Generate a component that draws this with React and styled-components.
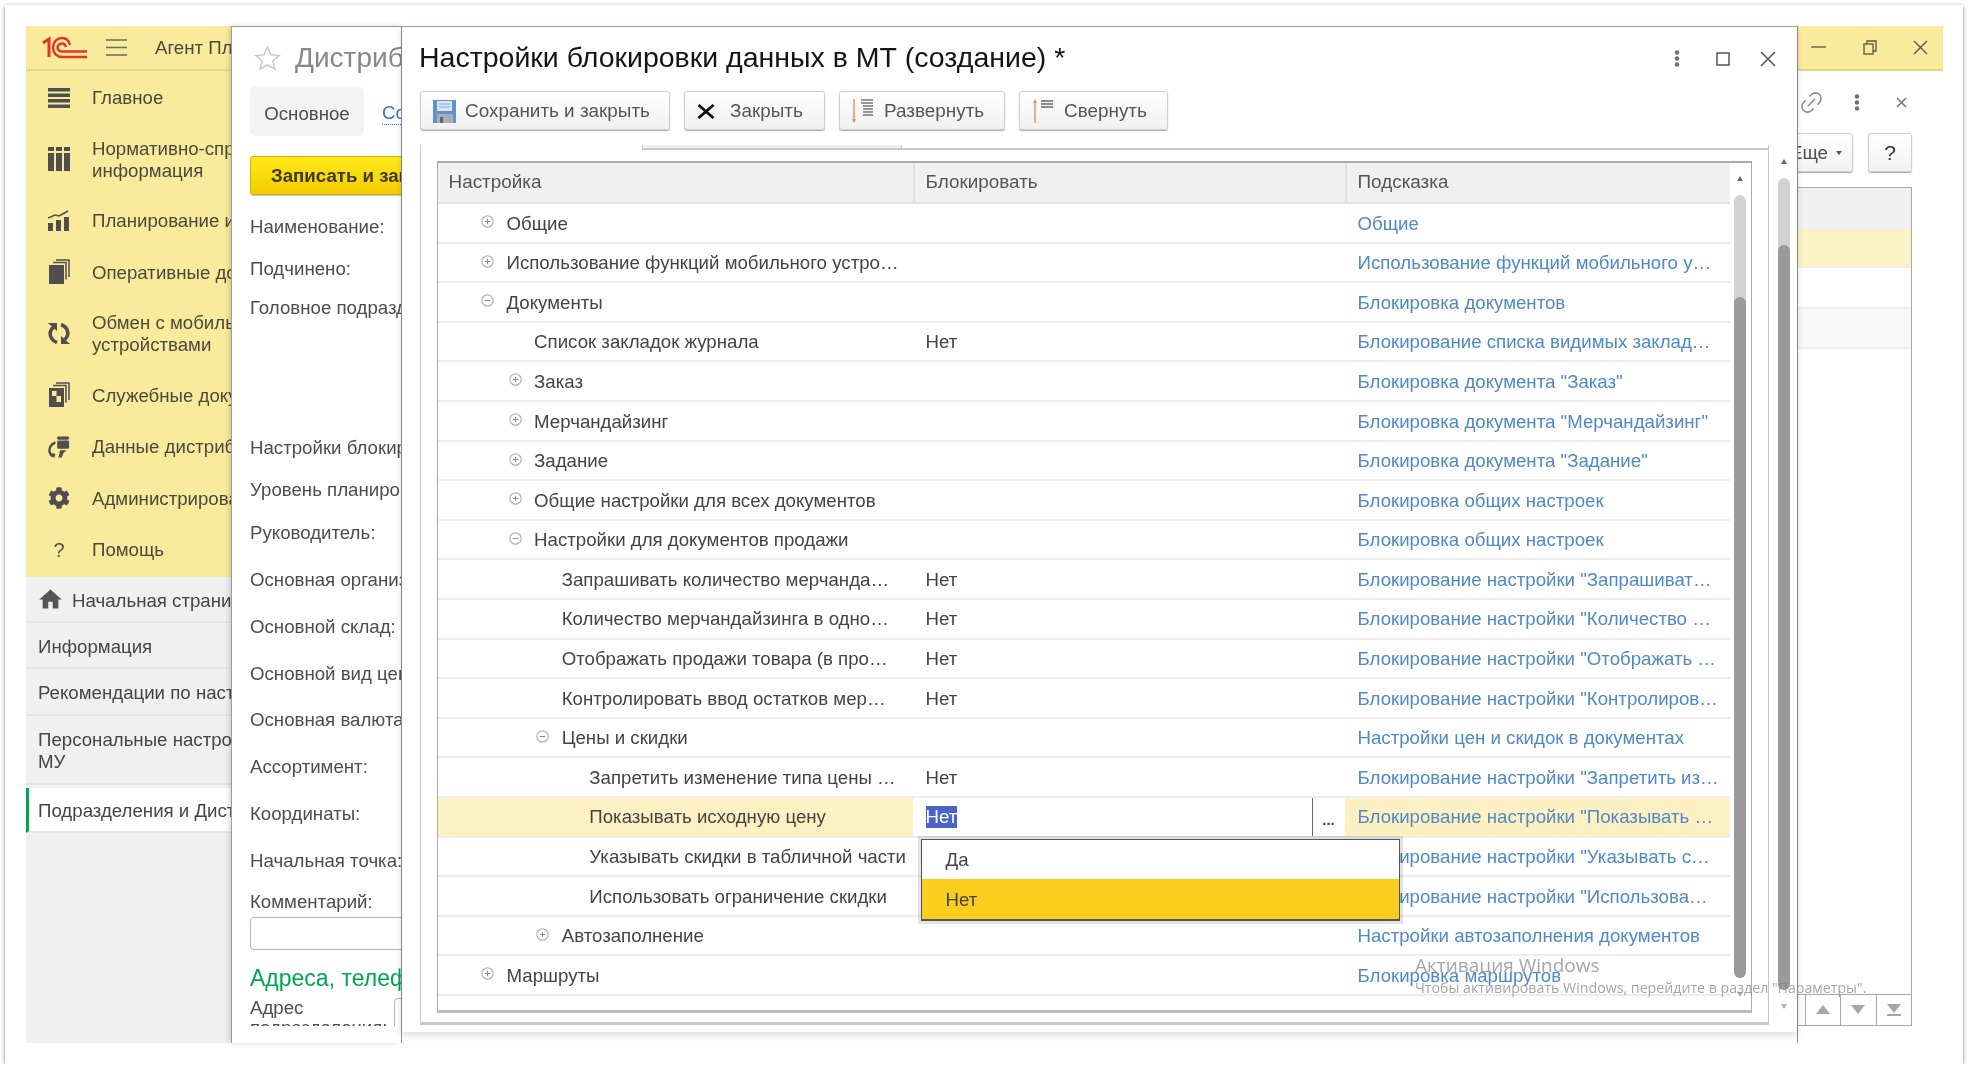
import React from 'react';
import styled, { createGlobalStyle } from 'styled-components';
import { FaCog } from 'react-icons/fa';
import { MdHome } from 'react-icons/md';
import { Link2 } from 'lucide-react';

const Global = createGlobalStyle`
  html, body { margin: 0; padding: 0; background: #fff; overflow: hidden; }
  * { box-sizing: border-box; }
  body { font-family: "Liberation Sans", Arial, sans-serif; font-size: 18.67px; color: #4d4d4d; }
`;

const Card = styled.div`
  position: relative;
  margin: 5px 0 0 5px;
  width: 1958px;
  height: 1059px;
  padding: 21px 20px 21px 21px;
  background: #fff;
  box-shadow: 0 1px 4px rgba(0, 0, 0, 0.45);
  filter: blur(0.4px);
`;
const Window = styled.div`
  display: flex;
  height: 1017px;
  background: #fff;
`;

/* sidebar */
const Sidebar = styled.aside`
  width: 205px;
  flex: none;
  display: flex;
  flex-direction: column;
  overflow: hidden;
  white-space: nowrap;
  background: #f0f0f0;
`;
const AppBar = styled.div`
  height: 45px;
  flex: none;
  display: flex;
  align-items: center;
  padding-left: 16px;
  background: #faeb9c;
  border-bottom: 2px solid #e4d88f;
`;
const AppTitle = styled.span`
  margin-left: 28px;
  padding-top: 1px;
  color: #4a4a3c;
`;
const Hamburger = styled.svg`
  margin-left: 19px;
  flex: none;
`;
const Nav = styled.nav`
  height: 506px;
  flex: none;
  padding-top: 1px;
  background: #faeb9c;
`;
const NavItem = styled.div`
  display: flex;
  align-items: center;
  height: ${p => (p.$tall ? 71.5 : 51.5)}px;
  padding-left: 22px;
  line-height: 22px;
  color: #4a4a3c;
`;
const NavText = styled.span`
  padding-top: 1px;
`;
const NavIcon = styled.span`
  width: 22px;
  height: 22px;
  flex: none;
  margin-right: 22px;
  display: flex;
  align-items: center;
  justify-content: center;
  color: #4f4f4f;
  font-size: 20px;
`;
const Section = styled.div`
  display: flex;
  align-items: center;
  height: ${p => p.$h}px;
  margin-top: ${p => (p.$active ? 3 : 0)}px;
  padding-left: ${p => (p.$active ? 9 : 12)}px;
  padding-top: 3px;
  line-height: 22px;
  background: ${p => (p.$active ? '#fff' : '#f0f0f0')};
  border-left: ${p => (p.$active ? '3px solid #00a650' : '0')};
  border-bottom: 2px solid #e4e4e4;
  color: #454545;
`;
const HomeIcon = styled(MdHome)`
  color: #555;
  font-size: 27px;
  margin: -2px 8px 0 -1px;
  flex: none;
`;

/* background form */
const FormPanel = styled.section`
  width: 170px;
  flex: none;
  overflow: hidden;
  white-space: nowrap;
  background: #fff;
  border-left: 1px solid #9c9c9c;
  border-top: 1px solid #9c9c9c;
  box-shadow: -2px 0 5px rgba(0, 0, 0, 0.15);
  padding-left: 18px;
  position: relative;
`;
const FormClip = styled.div`
  height: 999px;
  overflow: hidden;
`;
const FormHead = styled.div`
  height: 60px;
  display: flex;
  align-items: center;
  padding-top: 2px;
`;
const FormTitle = styled.span`
  margin-left: 14px;
  font-size: 28px;
  color: #888;
`;
const Tabs = styled.div`
  display: flex;
  align-items: center;
  height: 49px;
`;
const TabActive = styled.div`
  width: 114px;
  height: 49px;
  flex: none;
  display: flex;
  align-items: center;
  justify-content: center;
  padding-top: 4px;
  background: #f3f3f3;
  border-radius: 5px;
`;
const TabLink = styled.span`
  margin-left: 18px;
  margin-top: 4px;
  color: #3b73c0;
  border-bottom: 1px dotted #3b73c0;
`;
const SaveBtn = styled.div`
  margin-top: 20px;
  height: 39px;
  width: 260px;
  display: flex;
  align-items: center;
  padding-left: 20px;
  font-weight: bold;
  color: #3c3a20;
  background: linear-gradient(#ffe81a, #f3cd00);
  border: 1px solid #d0b400;
  border-radius: 3px;
  box-shadow: 0 1px 1px rgba(0, 0, 0, 0.25);
`;
const FieldLabel = styled.div`
  margin-top: ${p => p.$top}px;
  height: 22px;
  line-height: 22px;
`;
const Memo = styled.div`
  margin-top: 4px;
  height: 33px;
  width: 200px;
  border: 1px solid #b4b4b4;
  border-radius: 4px;
`;
const GroupTitle = styled.div`
  margin-top: 15px;
  height: 26px;
  line-height: 26px;
  font-size: 23px;
  color: #00a650;
`;
const AddressRow = styled.div`
  margin-top: 7px;
  display: flex;
  height: 60px;
  line-height: 20px;
  white-space: normal;
`;
const AddressLabel = styled.div`
  width: 144px;
  flex: none;
`;
const AddressBox = styled.div`
  width: 100px;
  height: 40px;
  flex: none;
  border: 1px solid #b4b4b4;
  border-radius: 4px;
`;

/* dialog */
const DialogSlot = styled.div`
  width: 1397px;
  flex: none;
  position: relative;
  z-index: 1;
  background: #fff;
  border-left: 1px solid #8c8c8c;
  border-right: 1px solid #8c8c8c;
`;
const Dialog = styled.div`
  height: 1006px;
  display: flex;
  flex-direction: column;
  padding-left: 18px;
  background: #fff;
  border-top: 1px solid #9c9c9c;
  box-shadow: 0 3px 7px rgba(0, 0, 0, 0.14);
`;
const DialogHead = styled.div`
  height: 64px;
  flex: none;
  display: flex;
  align-items: center;
  padding-bottom: 4px;
`;
const DialogTitle = styled.h1`
  margin: 0 0 0 -1px;
  flex: 1;
  font-weight: normal;
  font-size: 28.5px;
  color: #141414;
`;
const HeadControls = styled.div`
  display: flex;
  align-items: center;
  margin-right: 21px;
  margin-top: 3px;
`;
const Toolbar = styled.div`
  height: 39px;
  flex: none;
  display: flex;
  gap: 14px;
`;
const ToolButton = styled.button`
  display: flex;
  align-items: center;
  width: ${p => p.$w}px;
  height: 39px;
  padding: 1px 0 0 ${p => p.$pad}px;
  font: inherit;
  font-size: 18.9px;
  color: #555;
  background: linear-gradient(#fff, #f0f0f0);
  border: 1px solid #cfcfcf;
  border-radius: 3px;
  box-shadow: 0 1px 1px rgba(0, 0, 0, 0.35);
`;
const ToolIcon = styled.svg`
  flex: none;
  margin-right: ${p => p.$gap}px;
`;
const Body = styled.div`
  flex: 1;
  min-height: 0;
  display: flex;
  margin-top: 15px;
  height: 880px;
`;
const TabPanel = styled.div`
  width: 1349px;
  height: 880px;
  flex: none;
  display: flex;
  flex-direction: column;
  border-left: 1px solid #c8c8c8;
  border-right: 1px solid #c8c8c8;
  border-bottom: 3px solid #c8c8c8;
  padding: 0 0 9px 0;
`;
const TabStrip = styled.div`
  height: 5px;
  flex: none;
  display: flex;
`;
const TabStub = styled.div`
  margin-left: 221px;
  width: 260px;
  flex: none;
  background: #eeeeee;
  border: 1px solid #c8c8c8;
  border-top: 0;
  border-bottom-width: 2px;
`;
const TabLine = styled.div`
  flex: 1;
  border-bottom: 2px solid #c8c8c8;
  margin-right: -1px;
`;
const Table = styled.div`
  margin: 11px 16px 0 15.5px;
  height: 852px;
  flex: none;
  display: flex;
  border: 1px solid #ababab;
  border-top-width: 2px;
  border-bottom: 3px solid #bdbdbd;
`;
const Grid = styled.div`
  width: 1292px;
  flex: none;
`;
const HeaderRow = styled.div`
  display: grid;
  grid-template-columns: 475px 432px 1fr;
  height: 41px;
  background: #f0f0f0;
  border-bottom: 2px solid #e2e2e2;
`;
const HeaderCell = styled.div`
  display: flex;
  align-items: center;
  padding-left: 11px;
  padding-bottom: 1px;
  font-size: 18.9px;
  color: #555;
  border-left: ${p => (p.$first ? '0' : '2px solid #e2e2e2')};
`;
const Row = styled.div`
  display: grid;
  grid-template-columns: 475px 432px 1fr;
  height: 39.6px;
  border-bottom: 2px solid #ededed;
  white-space: nowrap;
`;
const NameCell = styled.div`
  display: flex;
  align-items: center;
  padding-left: ${p => 43.5 + p.$level * 27.6}px;
  padding-top: 1.5px;
  background: ${p => (p.$hl ? '#fdf1c3' : 'transparent')};
  color: #444;
`;
const Toggle = styled.svg`
  width: 13px;
  height: 13px;
  flex: none;
  margin: -4px 12.5px 0 0;
`;
const ToggleSpace = styled.span`
  width: 25.5px;
  flex: none;
`;
const ValueCell = styled.div`
  display: flex;
  align-items: center;
  padding-left: 13px;
  padding-top: 1.5px;
  color: #444;
`;
const EditCell = styled(ValueCell)`
  position: relative;
  padding-right: 0;
`;
const Selected = styled.span`
  background: #4a63c8;
  color: #fff;
  line-height: 22px;
`;
const EditButton = styled.span`
  position: absolute;
  top: 0;
  right: 0;
  bottom: 0;
  width: 33px;
  display: flex;
  align-items: center;
  justify-content: center;
  padding-top: 6px;
  font-weight: bold;
  font-size: 15px;
  border-left: 1px solid #666;
`;
const Dropdown = styled.div`
  position: absolute;
  z-index: 3;
  top: 41px;
  left: 8px;
  width: 479px;
  height: 82px;
  background: #fff;
  border: 1px solid #555;
  border-bottom-width: 2px;
  box-shadow: 0 0 0 3px rgba(0, 0, 0, 0.11);
`;
const Option = styled.div`
  height: ${p => (p.$on ? 40 : 39)}px;
  display: flex;
  align-items: center;
  padding-left: 24px;
  padding-top: ${p => (p.$on ? 3 : 2)}px;
  color: #444;
  background: ${p => (p.$on ? '#fbcd1e' : '#fff')};
`;
const HintCell = styled.div`
  display: flex;
  align-items: center;
  padding-left: 13px;
  padding-top: 1.5px;
  color: #5089c6;
  background: ${p => (p.$hl ? '#fdf1c3' : 'transparent')};
`;
const Gutter = styled.div`
  flex: 1;
  display: flex;
  flex-direction: column;
  align-items: center;
  padding-top: ${p => p.$top}px;
`;
const Arrow = styled.div`
  width: 0;
  height: 0;
  flex: none;
  border-left: 3px solid transparent;
  border-right: 3px solid transparent;
  ${p => (p.$down ? 'border-top: 5px solid #b0b0b0;' : 'border-bottom: 5px solid #666;')}
`;
const Track = styled.div`
  width: ${p => p.$w}px;
  height: ${p => p.$h}px;
  flex: none;
  margin: ${p => p.$gap}px 0;
  padding-top: ${p => p.$thumb}px;
  background: #d2d2d2;
  border-radius: 6px;
`;
const Thumb = styled.div`
  height: 100%;
  background: #9a9a9a;
  border-radius: 6px;
`;
const OuterGutter = styled(Gutter)`
  flex: none;
  width: 29px;
  padding-left: 8px;
  padding-right: 7px;
`;

/* right form */
const RightPane = styled.div`
  width: 145px;
  flex: none;
  display: flex;
  flex-direction: column;
  overflow: hidden;
  background: #fff;
`;
const RightBar = styled.div`
  height: 45px;
  flex: none;
  display: flex;
  align-items: center;
  padding-left: 13px;
  background: #faeb9c;
  border-bottom: 2px solid #e4d88f;
`;
const WinGap = styled.svg`
  flex: none;
  margin-left: ${p => p.$ml}px;
`;
const RightTools = styled.div`
  height: 62px;
  flex: none;
  display: flex;
  align-items: center;
  padding-top: 0;
  color: #8e8e8e;
`;
const RightButtons = styled.div`
  height: 39px;
  flex: none;
  display: flex;
  justify-content: flex-end;
  padding-right: 31px;
  gap: 15px;
`;
const MoreBtn = styled.div`
  width: 90px;
  flex: none;
  display: flex;
  align-items: center;
  justify-content: flex-end;
  padding-right: 10px;
  gap: 8px;
  background: linear-gradient(#fff, #f2f2f2);
  border: 1px solid #cfcfcf;
  border-radius: 3px;
  box-shadow: 0 1px 1px rgba(0, 0, 0, 0.35);
`;
const HelpBtn = styled(MoreBtn)`
  width: 44px;
  padding: 0;
  justify-content: center;
  font-size: 21px;
  color: #333;
`;
const Caret = styled.span`
  width: 0;
  height: 0;
  border-left: 3px solid transparent;
  border-right: 3px solid transparent;
  border-top: 4px solid #555;
`;
const MiniTable = styled.div`
  margin: 15px 31px 0 -2px;
  height: 839px;
  flex: none;
  display: flex;
  flex-direction: column;
  border: 1px solid #a8a8a8;
  background: #fff;
`;
const MiniRow = styled.div`
  height: ${p => p.$h}px;
  flex: none;
  background: ${p => p.$bg};
  border-bottom: 2px solid #eeeeee;
`;
const MiniFill = styled.div`
  flex: 1;
`;
const MiniFoot = styled.div`
  height: 31px;
  flex: none;
  display: flex;
  padding-left: 8px;
  border-top: 1px solid #a8a8a8;
`;
const FootBtn = styled.div`
  flex: 1;
  display: flex;
  align-items: center;
  justify-content: center;
  border-left: 1px solid #a8a8a8;
`;

const Watermark = styled.div`
  position: absolute;
  z-index: 5;
  left: 1410px;
  top: 948px;
  color: rgba(130, 130, 130, 0.72);
  pointer-events: none;
  white-space: nowrap;
`;
const WaterBig = styled.div`
  font-family: "Open Sans", sans-serif;
  font-size: 19px;
  line-height: 25px;
`;
const WaterSmall = styled.div`
  font-family: "Open Sans", sans-serif;
  font-size: 14.2px;
  line-height: 20px;
`;

const Logo = () => (
  <svg width="45" height="23" viewBox="0 0 45 23" fill="none" stroke="#e3342b" strokeWidth="2.4" style={{ flex: 'none' }}>
    <path d="M1 7l6-4v18" strokeWidth="3" />
    <path d="M28 9c-1-4-4-7-8-7-5 0-9 4-9 9.500s4 9.500 9 9.500h25" />
    <path d="M24 11c-.6-2-2-3.500-4-3.500-2.500 0-4.500 2-4.500 4s2 4 4.500 4h25" />
  </svg>
);
const Bars = () => (
  <svg width="22" height="22" viewBox="0 0 22 22" fill="#4f4f4f">
    <rect y="1" width="22" height="3.500" /><rect y="6.500" width="22" height="3.500" /><rect y="12" width="22" height="3.500" /><rect y="17.500" width="22" height="3.500" />
  </svg>
);
const Columns = () => (
  <svg width="22" height="26" viewBox="0 0 22 26" fill="#4f4f4f">
    <rect x="0" y="1" width="6" height="4" /><rect x="8" y="1" width="6" height="4" /><rect x="16" y="1" width="6" height="4" />
    <rect x="0" y="7" width="6" height="18" /><rect x="8" y="7" width="6" height="18" /><rect x="16" y="7" width="6" height="18" />
  </svg>
);
const Chart = () => (
  <svg width="22" height="22" viewBox="0 0 22 22" fill="#4f4f4f">
    <rect x="0" y="13" width="5" height="8" /><rect x="8" y="10" width="5" height="11" /><rect x="16" y="7" width="5" height="14" />
    <path d="M0 8l7-3 4 1 9-5" fill="none" stroke="#4f4f4f" strokeWidth="1.600" />
  </svg>
);
const Docs = () => (
  <svg width="22" height="26" viewBox="0 0 22 26" fill="#4f4f4f">
    <rect x="1" y="6" width="15" height="19" />
    <path d="M5 3.500h13v17" fill="none" stroke="#4f4f4f" strokeWidth="1.500" />
    <path d="M8 1h13v17" fill="none" stroke="#4f4f4f" strokeWidth="1.500" />
  </svg>
);
const ServiceDocs = () => (
  <svg width="22" height="26" viewBox="0 0 22 26" fill="#4f4f4f">
    <rect x="1" y="6" width="15" height="19" />
    <rect x="4" y="9" width="4.500" height="5" fill="#faeb9c" /><rect x="8.500" y="14" width="4.500" height="6" fill="#faeb9c" />
    <path d="M5 3.500h13v17" fill="none" stroke="#4f4f4f" strokeWidth="1.500" />
    <path d="M8 1h13v17" fill="none" stroke="#4f4f4f" strokeWidth="1.500" />
  </svg>
);
const SyncIcon = () => (
  <svg width="22" height="23" viewBox="0 0 22 23" fill="#4f4f4f">
    <g>
      <path d="M0 1h9v8z" />
      <path d="M6 5C3.200 7 2 9.500 2.200 12c.2 3.500 2.800 7 6.800 8.500" fill="none" stroke="#4f4f4f" strokeWidth="3.600" />
    </g>
    <g transform="rotate(180 11 11.500)">
      <path d="M0 1h9v8z" />
      <path d="M6 5C3.200 7 2 9.500 2.200 12c.2 3.500 2.800 7 6.800 8.500" fill="none" stroke="#4f4f4f" strokeWidth="3.600" />
    </g>
  </svg>
);
const DataIcon = () => (
  <svg width="24" height="24" viewBox="0 0 24 24" fill="#4f4f4f">
    <rect x="10" y="0.500" width="13" height="3.500" rx="1.500" />
    <rect x="10" y="5" width="13" height="9" rx="1.500" />
    <path d="M13 15.500h7l-3.500 3.500-1.500 4.500h-4l1.500-4z" />
    <path d="M8 7C4 9 1.500 12 1.500 15.500c0 2.500 1.200 5 4 7" fill="none" stroke="#4f4f4f" strokeWidth="2.600" />
    <path d="M2 19l6 0-1 5z" />
  </svg>
);
const Floppy = () => (
  <ToolIcon $gap={9} width="23" height="23" viewBox="0 0 23 23">
    <path d="M0 0h23v23H0z" fill="#5f93cf" />
    <rect x="4" y="1" width="15" height="10" fill="#dbe6f2" />
    <path d="M6 4h11M6 7h11" stroke="#7ea6d4" strokeWidth="1.200" />
    <rect x="4" y="14" width="16" height="9" fill="#a9adb2" />
    <rect x="7" y="17" width="3" height="6" fill="#5b6878" />
  </ToolIcon>
);
const BigX = () => (
  <ToolIcon $gap={15} width="18" height="15" viewBox="0 0 18 15">
    <path d="M1.500 1l15 13M16.500 1l-15 13" stroke="#111" strokeWidth="2.800" />
  </ToolIcon>
);
const ExpandIc = () => (
  <ToolIcon $gap={10} width="23" height="26" viewBox="0 0 23 26" fill="none">
    <path d="M3 1v23" stroke="#e78a5a" strokeWidth="1.400" />
    <path d="M1 21l2 4 2-4z" fill="#e78a5a" />
    <path d="M10 2h12M10 5h12M12 8h10M12 11h10M12 14h10M12 17h10" stroke="#777" strokeWidth="1.300" />
  </ToolIcon>
);
const CollapseIc = () => (
  <ToolIcon $gap={10} width="22" height="26" viewBox="0 0 22 26" fill="none">
    <path d="M3 3v22" stroke="#e78a5a" strokeWidth="1.400" />
    <path d="M1 5l2-4 2 4z" fill="#e78a5a" />
    <path d="M9 3h12M9 6h12M9 9h12" stroke="#666" strokeWidth="1.500" />
  </ToolIcon>
);
const ToggleIc = ({ open }) => (
  <Toggle viewBox="0 0 13 13" fill="none" stroke="#b4b4b4">
    <circle cx="6.500" cy="6.500" r="5.700" strokeWidth="1.200" />
    <path d="M3.800 6.500h5.400" stroke="#8a8a8a" />
    {!open && <path d="M6.500 3.800v5.400" stroke="#8a8a8a" />}
  </Toggle>
);
const Kebab = ({ ml = 0, color = '#6e6e6e' }) => (
  <svg width="6" height="17" viewBox="0 0 6 17" fill={color} style={{ marginLeft: ml, flex: 'none' }}>
    <circle cx="3" cy="2.500" r="2.200" /><circle cx="3" cy="8.500" r="2.200" /><circle cx="3" cy="14.500" r="2.200" />
  </svg>
);
const FootTri = ({ kind }) => (
  <svg width="16" height="14" viewBox="0 0 16 14" fill="#a6a6a6">
    {kind === 'up' && <path d="M8 2l7 9H1z" />}
    {kind === 'down' && <path d="M1 2h14l-7 9z" />}
    {kind === 'end' && <path d="M1 1h14l-7 9zM1 11h14v2H1z" />}
  </svg>
);

const navItems = [
  [<Bars />, 'Главное'],
  [<Columns />, <>Нормативно-справочная<br />информация</>, true],
  [<Chart />, 'Планирование и анализ'],
  [<Docs />, 'Оперативные документы'],
  [<SyncIcon />, <>Обмен с мобильными<br />устройствами</>, true],
  [<ServiceDocs />, 'Служебные документы'],
  [<DataIcon />, 'Данные дистрибьюторов'],
  [<FaCog size={24} />, 'Администрирование'],
  ['?', 'Помощь'],
];

const labels = [
  ['Наименование:', 21], ['Подчинено:', 20], ['Головное подразделение:', 17],
  ['Настройки блокировки:', 118], ['Уровень планирования:', 20], ['Руководитель:', 21],
  ['Основная организация:', 25], ['Основной склад:', 25], ['Основной вид цены:', 25],
  ['Основная валюта:', 24], ['Ассортимент:', 25], ['Координаты:', 25],
  ['Начальная точка:', 25], ['Комментарий:', 19],
];

const rows = [
  ['Общие', 0, 'plus', '', 'Общие'],
  ['Использование функций мобильного устро…', 0, 'plus', '', 'Использование функций мобильного у…'],
  ['Документы', 0, 'minus', '', 'Блокировка документов'],
  ['Список закладок журнала', 1, '', 'Нет', 'Блокирование списка видимых заклад…'],
  ['Заказ', 1, 'plus', '', 'Блокировка документа "Заказ"'],
  ['Мерчандайзинг', 1, 'plus', '', 'Блокировка документа "Мерчандайзинг"'],
  ['Задание', 1, 'plus', '', 'Блокировка документа "Задание"'],
  ['Общие настройки для всех документов', 1, 'plus', '', 'Блокировка общих настроек'],
  ['Настройки для документов продажи', 1, 'minus', '', 'Блокировка общих настроек'],
  ['Запрашивать количество мерчанда…', 2, '', 'Нет', 'Блокирование настройки "Запрашиват…'],
  ['Количество мерчандайзинга в одно…', 2, '', 'Нет', 'Блокирование настройки "Количество …'],
  ['Отображать продажи товара (в про…', 2, '', 'Нет', 'Блокирование настройки "Отображать …'],
  ['Контролировать ввод остатков мер…', 2, '', 'Нет', 'Блокирование настройки "Контролиров…'],
  ['Цены и скидки', 2, 'minus', '', 'Настройки цен и скидок в документах'],
  ['Запретить изменение типа цены …', 3, '', 'Нет', 'Блокирование настройки "Запретить из…'],
  ['Показывать исходную цену', 3, '', 'edit', 'Блокирование настройки "Показывать …'],
  ['Указывать скидки в табличной части', 3, '', '', 'Блокирование настройки "Указывать с…'],
  ['Использовать ограничение скидки', 3, '', '', 'Блокирование настройки "Использова…'],
  ['Автозаполнение', 2, 'plus', '', 'Настройки автозаполнения документов'],
  ['Маршруты', 0, 'plus', '', 'Блокировка маршрутов'],
];

export default function App() {
  return (
    <>
      <Global />
      <Card>
        <Window>
          <Sidebar>
            <AppBar>
              <Logo />
              <Hamburger width="21" height="17" viewBox="0 0 21 17" stroke="#6a6a5c" strokeWidth="1.600">
                <path d="M0 1h21M0 8.500h21M0 16h21" />
              </Hamburger>
              <AppTitle>Агент Плюс: Управление дистрибуцией</AppTitle>
            </AppBar>
            <Nav>
              {navItems.map(([icon, text, tall], i) => (
                <NavItem key={i} $tall={tall}>
                  <NavIcon>{icon}</NavIcon>
                  <NavText>{text}</NavText>
                </NavItem>
              ))}
            </Nav>
            <Section $h={46}><HomeIcon />Начальная страница</Section>
            <Section $h={46}>Информация</Section>
            <Section $h={47}>Рекомендации по настройке</Section>
            <Section $h={69}><span>Персональные настройки<br />МУ</span></Section>
            <Section $h={45} $active>Подразделения и Дистрибьюторы</Section>
          </Sidebar>

          <FormPanel>
            <FormClip>
              <FormHead>
                <svg width="27" height="26" viewBox="0 0 27 26" fill="none" stroke="#c9c9c9" strokeWidth="1.500" style={{ marginLeft: 4, flex: 'none' }}>
                  <path d="M13.500 2l3.400 7.700 8.300.8-6.300 5.500 1.900 8.100-7.300-4.300-7.300 4.300 1.900-8.100L1.800 10.500l8.300-.8z" />
                </svg>
                <FormTitle>Дистрибьютор</FormTitle>
              </FormHead>
              <Tabs>
                <TabActive>Основное</TabActive>
                <TabLink>Сотрудники</TabLink>
              </Tabs>
              <SaveBtn>Записать и закрыть</SaveBtn>
              {labels.map(([t, top]) => <FieldLabel key={t} $top={top}>{t}</FieldLabel>)}
              <Memo />
              <GroupTitle>Адреса, телефоны</GroupTitle>
              <AddressRow>
                <AddressLabel>Адрес подразделения:</AddressLabel>
                <AddressBox />
              </AddressRow>
            </FormClip>
          </FormPanel>

          <DialogSlot>
            <Dialog>
              <DialogHead>
                <DialogTitle>Настройки блокировки данных в МТ (создание) *</DialogTitle>
                <HeadControls>
                  <Kebab />
                  <svg width="14" height="14" viewBox="0 0 14 14" fill="none" stroke="#555" strokeWidth="1.500" style={{ marginLeft: 36 }}>
                    <rect x="1" y="1" width="12" height="12" />
                  </svg>
                  <svg width="16" height="16" viewBox="0 0 16 16" stroke="#555" strokeWidth="1.500" style={{ marginLeft: 30 }}>
                    <path d="M1 1l14 14M15 1L1 15" />
                  </svg>
                </HeadControls>
              </DialogHead>
              <Toolbar>
                <ToolButton $w={250} $pad={12}><Floppy />Сохранить и закрыть</ToolButton>
                <ToolButton $w={141} $pad={12}><BigX />Закрыть</ToolButton>
                <ToolButton $w={166} $pad={11}><ExpandIc />Развернуть</ToolButton>
                <ToolButton $w={149} $pad={12}><CollapseIc />Свернуть</ToolButton>
              </Toolbar>
              <Body>
                <TabPanel>
                  <TabStrip><TabStub /><TabLine /></TabStrip>
                  <Table>
                    <Grid>
                      <HeaderRow>
                        <HeaderCell $first>Настройка</HeaderCell>
                        <HeaderCell>Блокировать</HeaderCell>
                        <HeaderCell>Подсказка</HeaderCell>
                      </HeaderRow>
                      {rows.map(([name, level, tg, value, hint], i) => {
                        const hl = value === 'edit';
                        return (
                          <Row key={i}>
                            <NameCell $level={level} $hl={hl}>
                              {tg ? <ToggleIc open={tg === 'minus'} /> : <ToggleSpace />}
                              {name}
                            </NameCell>
                            {hl ? (
                              <EditCell>
                                <Selected>Нет</Selected>
                                <EditButton>...</EditButton>
                                <Dropdown>
                                  <Option>Да</Option>
                                  <Option $on>Нет</Option>
                                </Dropdown>
                              </EditCell>
                            ) : (
                              <ValueCell>{value}</ValueCell>
                            )}
                            <HintCell $hl={hl}>{hint}</HintCell>
                          </Row>
                        );
                      })}
                    </Grid>
                    <Gutter $top={13}>
                      <Arrow />
                      <Track $w={12} $h={783} $gap={14} $thumb={102}><Thumb /></Track>
                      <Arrow $down />
                    </Gutter>
                  </Table>
                </TabPanel>
                <OuterGutter $top={14}>
                  <Arrow />
                  <Track $w={12} $h={812} $gap={14} $thumb={67}><Thumb /></Track>
                  <Arrow $down />
                </OuterGutter>
              </Body>
            </Dialog>
          </DialogSlot>

          <RightPane>
            <RightBar>
              <WinGap $ml={0} width="15" height="3" viewBox="0 0 15 3"><rect width="15" height="2" fill="#8c8c6c" y="0" /></WinGap>
              <WinGap $ml={37} width="14" height="15" viewBox="0 0 14 15" fill="none" stroke="#55554a" strokeWidth="1.300">
                <rect x="1" y="4" width="9" height="10" /><path d="M4 4V1h9v10h-3" />
              </WinGap>
              <WinGap $ml={36} width="15" height="15" viewBox="0 0 15 15" stroke="#55554a" strokeWidth="1.400">
                <path d="M1 1l13 13M14 1L1 14" />
              </WinGap>
            </RightBar>
            <RightTools>
              <Link2 size={27} strokeWidth={1.4} style={{ transform: 'rotate(-45deg)', flex: 'none' }} />
              <Kebab ml={29} />
              <svg width="11" height="11" viewBox="0 0 11 11" stroke="#777" strokeWidth="1.500" style={{ marginLeft: 36 }}>
                <path d="M1 1l9 9M10 1L1 10" />
              </svg>
            </RightTools>
            <RightButtons>
              <MoreBtn>Еще<Caret /></MoreBtn>
              <HelpBtn>?</HelpBtn>
            </RightButtons>
            <MiniTable>
              <MiniRow $h={42} $bg="#f0f0f0" />
              <MiniRow $h={38} $bg="#fdf1c3" />
              <MiniRow $h={41} $bg="#fff" />
              <MiniRow $h={40} $bg="#f8f8f8" />
              <MiniFill />
              <MiniFoot>
                <FootBtn><FootTri kind="up" /></FootBtn>
                <FootBtn><FootTri kind="down" /></FootBtn>
                <FootBtn><FootTri kind="end" /></FootBtn>
              </MiniFoot>
            </MiniTable>
          </RightPane>
        </Window>
        <Watermark>
          <WaterBig>Активация Windows</WaterBig>
          <WaterSmall>Чтобы активировать Windows, перейдите в раздел "Параметры".</WaterSmall>
        </Watermark>
      </Card>
    </>
  );
}
